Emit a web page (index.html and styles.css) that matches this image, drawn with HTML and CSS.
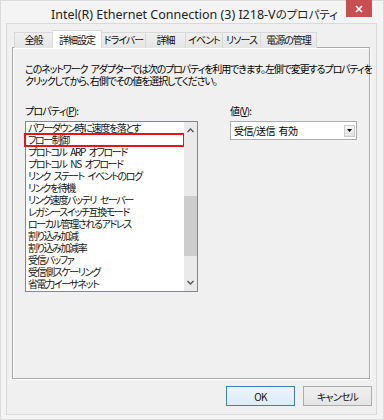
FILE: index.html
```html
<!DOCTYPE html>
<html lang="ja">
<head>
    <meta charset="UTF-8">
    <title>Intel(R) Ethernet Connection (3) I218-Vのプロパティ</title>
    <link rel="stylesheet" href="styles.css">
</head>
<body>
    <div class="janela">
        <div class="barra-titulo">
            <span class="titulo">Intel(R) Ethernet Connection (3) I218-V<span class="jp">のプロパティ</span></span>
            <span class="fechar">
                <svg width="8" height="8" viewBox="0 0 8 8"><path d="M1 1L7 7M7 1L1 7" stroke="#fff" stroke-width="1.6"/></svg>
            </span>
        </div>

        <div class="cliente">
            <!-- Abas -->
            <div class="abas">
                <div class="aba aba-1">全般</div>
                <div class="aba aba-2 ativa">詳細設定</div>
                <div class="aba aba-3">ドライバー</div>
                <div class="aba aba-4">詳細</div>
                <div class="aba aba-5">イベント</div>
                <div class="aba aba-6">リソース</div>
                <div class="aba aba-7">電源の管理</div>
            </div>

            <div class="painel">
                <p class="descricao">このネットワーク アダプターでは次のプロパティを利用できます。左側で変更するプロパティを<br>クリックしてから、右側でその値を選択してください。</p>

                <div class="campos">
                    <div class="campo-esq">
                        <div class="rotulo">プロパティ(<u>P</u>):</div>
                        <div class="lista">
                            <ul class="itens">
                                <li>パワーダウン時に速度を落とす</li>
                                <li class="marcado">フロー制御</li>
                                <li>プロトコル ARP オフロード</li>
                                <li>プロトコル NS オフロード</li>
                                <li>リンク ステート イベントのログ</li>
                                <li>リンクを待機</li>
                                <li>リンク速度バッテリ セーバー</li>
                                <li>レガシースイッチ互換モード</li>
                                <li>ローカル管理されるアドレス</li>
                                <li>割り込み加減</li>
                                <li>割り込み加減率</li>
                                <li>受信バッファ</li>
                                <li>受信側スケーリング</li>
                                <li>省電力イーサネット</li>
                            </ul>
                            <div class="rolagem">
                                <div class="seta">
                                    <svg width="7" height="5" viewBox="0 0 7 5"><path d="M0.5 4L3.5 1L6.5 4" fill="none" stroke="#555" stroke-width="1.4"/></svg>
                                </div>
                                <div class="trilho">
                                    <div class="polegar"></div>
                                </div>
                                <div class="seta">
                                    <svg width="7" height="5" viewBox="0 0 7 5"><path d="M0.5 1L3.5 4L6.5 1" fill="none" stroke="#555" stroke-width="1.4"/></svg>
                                </div>
                            </div>
                        </div>
                    </div>

                    <div class="campo-dir">
                        <div class="rotulo">値(<u>V</u>):</div>
                        <div class="combo">
                            <span>受信/送信 有効</span>
                            <span class="combo-btn">
                                <svg width="5" height="3" viewBox="0 0 5 3"><path d="M0 0H5L2.5 3Z" fill="#000"/></svg>
                            </span>
                        </div>
                    </div>
                </div>
            </div>

            <div class="botoes">
                <button class="botao padrao">OK</button>
                <button class="botao">キャンセル</button>
            </div>
        </div>
    </div>
</body>
</html>
```

FILE: styles.css
```css
:root {
    --fundo: #f0f0f0;
    --moldura: #f4f4f4;
    --vermelho: #e5141c;
    --fonte-jp: "Noto Sans CJK JP", sans-serif;
}

body {
    margin: 0;
    background: #fff;
    font-family: var(--fonte-jp);
    color: #000;
}

.janela {
    width: 384px;
    height: 420px;
    box-sizing: border-box;
    background: var(--moldura);
    border: 1px solid #dcdcdc;
    padding: 0 6px 4px 5px;
    display: flex;
    flex-direction: column;
}

.barra-titulo {
    position: relative;
    height: 22px;
    flex: none;
    display: flex;
    align-items: center;
    justify-content: center;
}

.titulo {
    font-family: "Noto Sans", sans-serif;
    font-size: 12.5px;
    color: #222;
    margin-top: 4px;
    margin-left: 6px;
}

.titulo .jp {
    font-family: var(--fonte-jp);
    font-size: 11.5px;
    font-feature-settings: "palt";
}

.fechar {
    position: absolute;
    top: -1px;
    right: 5px;
    width: 26px;
    height: 17px;
    background: #c75050;
    display: flex;
    align-items: center;
    justify-content: center;
}

.cliente {
    flex: 1;
    background: var(--fundo);
    border: 1px solid #dadada;
    display: flex;
    flex-direction: column;
    padding: 7px 0 0 5px;
}

/* Abas */
.abas {
    display: flex;
    align-items: flex-end;
    height: 17px;
    padding-left: 2px;
    position: relative;
    z-index: 1;
    margin-bottom: -1px;
}

.aba {
    box-sizing: border-box;
    height: 16px;
    border: 1px solid #d9d9d9;
    border-bottom: none;
    margin-right: -1px;
    background: linear-gradient(#f0f0f0, #e5e5e5);
    font-size: 10px;
    line-height: 14px;
    text-align: center;
    font-feature-settings: "palt";
    letter-spacing: -1px;
    white-space: nowrap;
    color: #111;
}

.aba.ativa {
    height: 18px;
    background: #fff;
    line-height: 17px;
}

.aba-1 { width: 39px; }
.aba-2 { width: 50px; }
.aba-3 { width: 45px; }
.aba-4 { width: 41px; }
.aba-5 { width: 38px; }
.aba-6 { width: 39px; }
.aba-7 { width: 57px; }

.painel {
    box-sizing: border-box;
    height: 332px;
    width: 358px;
    border: 1px solid #a9a9a9;
    box-shadow: inset 1px 1px 0 #fff, 1px 1px 0 #fff;
    padding: 15px 12px 0 12px;
}

.descricao {
    margin: 0;
    font-size: 10px;
    line-height: 12px;
    font-feature-settings: "palt";
    letter-spacing: -1.1px;
    word-spacing: 2px;
    white-space: nowrap;
}

.campos {
    display: flex;
    gap: 32px;
    margin-top: 18px;
}

.rotulo {
    font-size: 10px;
    line-height: 12px;
    margin-bottom: 4px;
    font-feature-settings: "palt";
    letter-spacing: -0.8px;
}

.campo-esq {
    width: 173px;
}

.campo-dir {
    width: 127px;
}

/* Lista */
.lista {
    box-sizing: border-box;
    height: 171px;
    border: 1px solid #828790;
    background: #fff;
    display: flex;
}

.itens {
    list-style: none;
    margin: 0;
    padding: 0;
    flex: 1;
}

.itens li {
    height: 12px;
    line-height: 12px;
    font-size: 10px;
    padding-left: 2px;
    font-feature-settings: "palt";
    letter-spacing: -1.4px;
    word-spacing: 3px;
    white-space: nowrap;
    color: #111;
}

.itens li.marcado {
    outline: 2px solid var(--vermelho);
    outline-offset: -1px;
    margin-left: -1px;
    padding-left: 3px;
}

.rolagem {
    width: 13px;
    background: #eaeaea;
    display: flex;
    flex-direction: column;
}

.seta {
    height: 17px;
    display: flex;
    align-items: center;
    justify-content: center;
}

.trilho {
    flex: 1;
    padding-top: 57px;
}

.polegar {
    height: 60px;
    background: #cdcdcd;
}

/* Combo */
.combo {
    box-sizing: border-box;
    height: 19px;
    border: 1px solid #abadb3;
    background: #fff;
    display: flex;
    align-items: center;
    justify-content: space-between;
    padding: 0 1px 0 3px;
    font-size: 10px;
    font-feature-settings: "palt";
    letter-spacing: -0.6px;
    word-spacing: 2px;
}

.combo-btn {
    box-sizing: border-box;
    width: 11px;
    height: 12px;
    border: 1px solid #c9c9c9;
    background: linear-gradient(#f6f6f6, #e2e2e2);
    display: flex;
    align-items: center;
    justify-content: center;
}

/* Botões */
.botoes {
    display: flex;
    justify-content: flex-end;
    gap: 8px;
    margin-top: 7px;
    padding-right: 4px;
}

.botao {
    box-sizing: border-box;
    width: 69px;
    height: 20px;
    border: 1px solid #acacac;
    background: linear-gradient(#f0f0f0, #e5e5e5);
    font-family: var(--fonte-jp);
    font-size: 10px;
    font-feature-settings: "palt";
    letter-spacing: -0.8px;
    padding: 0;
    color: #111;
}

.botao.padrao {
    border-color: #3c7fb1;
    background: linear-gradient(#ecf4fc, #dcecfc);
}
```
